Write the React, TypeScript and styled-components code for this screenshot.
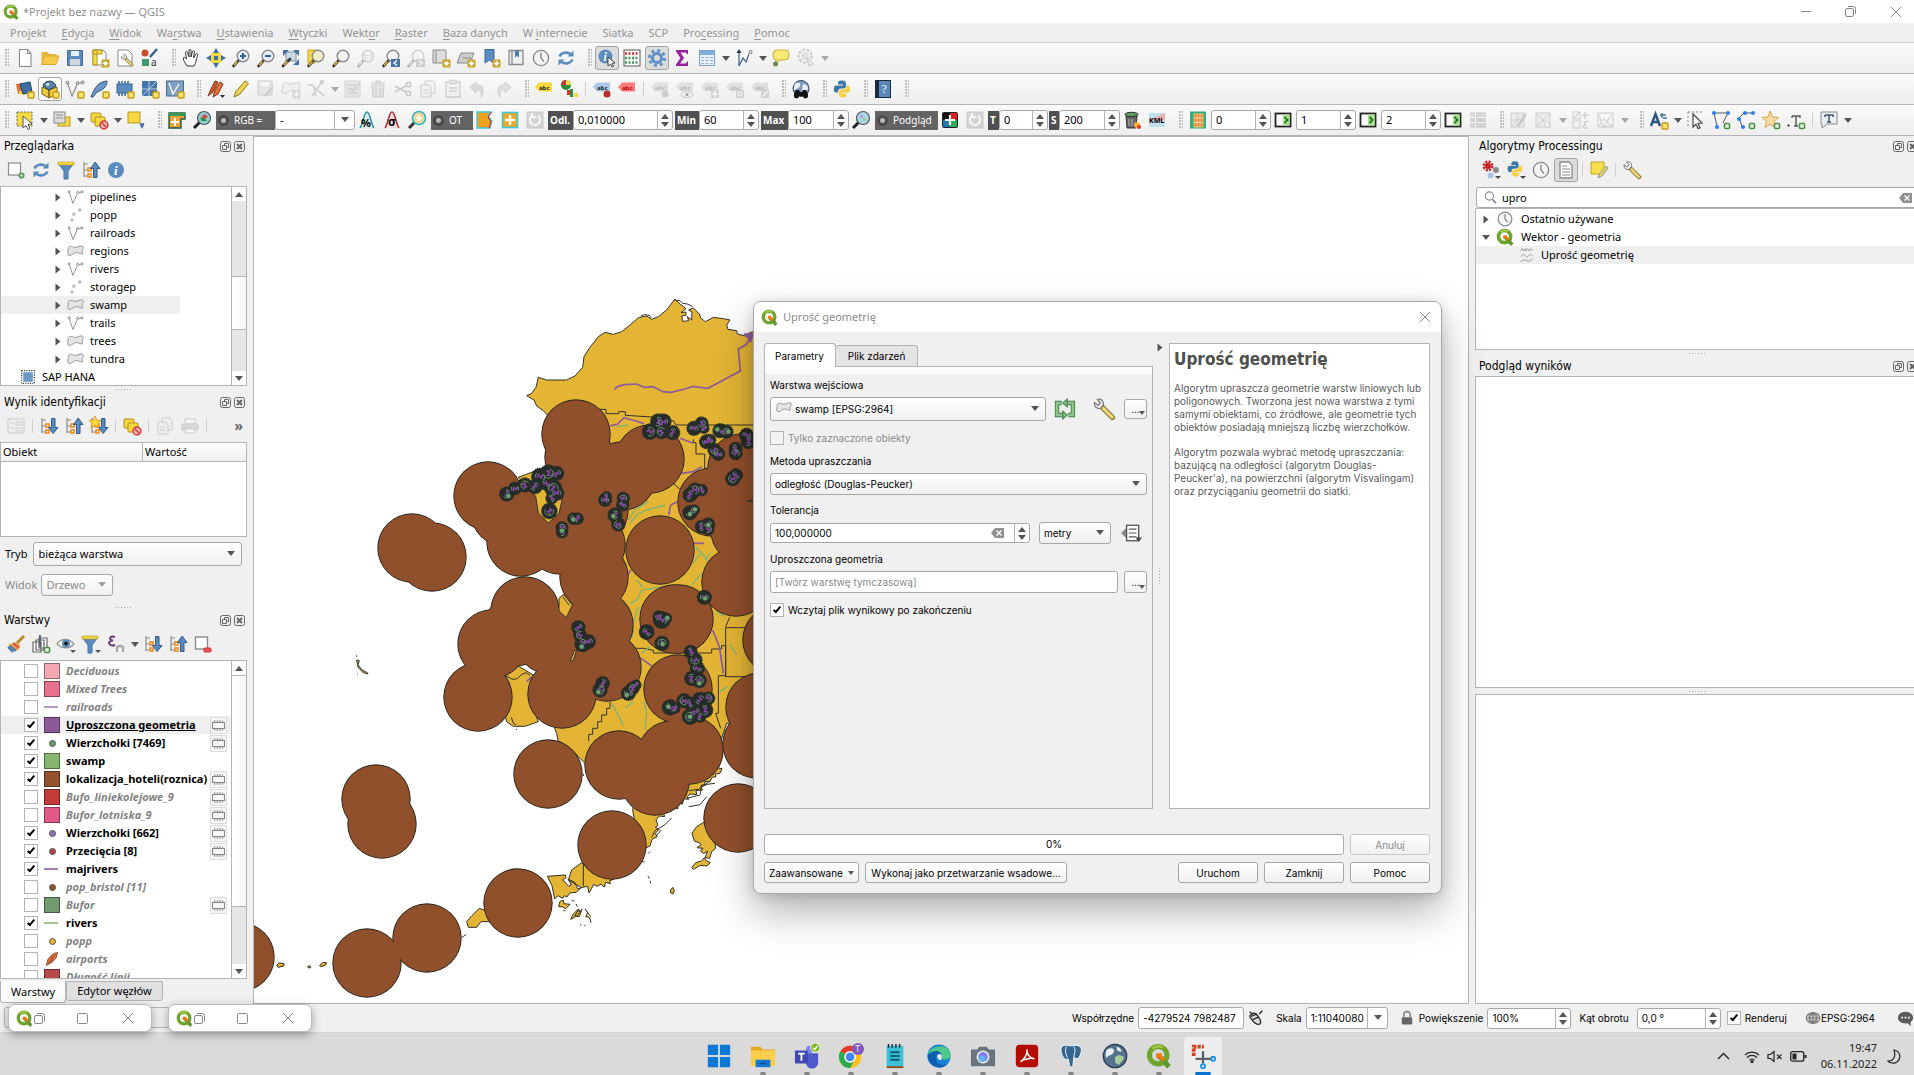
import React, { ReactNode } from "react";
import styled, { createGlobalStyle, css } from "styled-components";

const MAIN = `"Noto Sans", "Open Sans", sans-serif`;
const TITLE = `"DejaVu Sans Condensed", "DejaVu Sans", sans-serif`;
const DIALOG = `"Inter", "Noto Sans", sans-serif`;
const LINE = "#b4b4b4";

const Global = createGlobalStyle`
  *, *::before, *::after { box-sizing: border-box; }
  body { margin: 0; background: #f0f0f0; font-family: ${MAIN}; font-size: 11px; line-height: 16px; color: #000; }
  button, input, select { font: inherit; color: inherit; margin: 0; }
  svg { display: block; flex: none; }
`;

/* ---------- icon artwork, drawn on a 20 unit grid ---------- */
const Y = "#f5d93f", B = "#5b8cc0", G = "#8a8a8a", GR = "#5a9a58", OR = "#f08a1d";
const star = <g><rect x="11.5" y="11.5" width="8" height="8" rx="1" fill="#c9a227" /><path d="M15.5 12.8v5.4M12.8 15.5h5.4M13.6 13.6l3.8 3.8M17.4 13.6l-3.8 3.8" stroke="#fff" strokeWidth="1" /></g>;
const plusY = <rect x="13" y="13" width="6" height="6" rx="1" fill="#fbe36b" stroke="#c59a1a" strokeWidth="1.4" />;
const plusG = <rect x="13.5" y="13.5" width="5" height="5" rx="1" fill="#e9f5e6" stroke="#4d8f4a" strokeWidth="1.6" />;
const lens = (c: string) => <g><path d="M8 12 2.5 18" stroke="#333" strokeWidth="2.6" strokeLinecap="round" /><path d="M6.5 13.5 3 17.3" stroke="#f0c23a" strokeWidth="1.4" /><circle cx="12" cy="8" r="5.8" fill={c} stroke={G} strokeWidth="1.4" /></g>;
const nodeLine = <g fill="none" stroke={G} strokeWidth="1.1"><path d="M2.5 4 7 17 12.5 4.5l5-1" /><circle cx="2.5" cy="3.5" r="1.3" fill="#fff" /><circle cx="12.5" cy="4" r="1.3" fill="#fff" /><circle cx="17.6" cy="3.4" r="1.3" fill="#fff" /></g>;
const refresh = <g fill="none" stroke={B} strokeWidth="2.6"><path d="M3.5 8.5a7 6 0 0 1 11-2.5" /><path d="M16.5 11.5a7 6 0 0 1-11 2.5" /><path d="M17.5 2.5v6h-6z M2.5 17.5v-6h6z" fill={B} stroke="none" /></g>;
const clock = <g fill="#f6f6f6" stroke={G} strokeWidth="1.4"><circle cx="10" cy="10" r="7.6" /><path d="M10 4.5V10l3 3.5" fill="none" /></g>;
const qlogo = <g><circle cx="9.5" cy="9.5" r="6.8" fill="none" stroke="#6fa52e" strokeWidth="4" /><path d="M5 4.5a7 7 0 0 1 8-1" stroke="#a5c94a" strokeWidth="2" fill="none" /><path d="m10 10 8 8.5" stroke="#5d9a2c" strokeWidth="4" /><path d="M8 8h4.5L12 9.5l3 3-2 2-3-3L8 12z" fill="#ee7913" /></g>;
const layers2 = <g stroke="#b38f1a" fill={Y}><rect x="2" y="3" width="10" height="9" rx="1" /><rect x="6" y="7" width="10" height="9" rx="1" /></g>;
const noSign = <g><circle cx="15" cy="15" r="4" fill="#f7b0b0" stroke="#d23c3c" strokeWidth="1.4" /><path d="m12.5 12.5 5 5" stroke="#d23c3c" strokeWidth="1.4" /></g>;
const page = <path d="M4.5 1.5h8l3.5 4v13h-11.5z M12.5 1.5v4h3.5" fill="#fff" stroke={G} strokeWidth="1.1" />;
const tree = <path d="M3 2v15M3 4h4M3 10h4M3 16h4" fill="none" stroke={G} strokeWidth="1.2" />;
const sq = <g fill="#fff" stroke={OR} strokeWidth="1.6"><rect x="7" y="8" width="3" height="3" /><rect x="7" y="14" width="3" height="3" /></g>;
const down = <path d="M12.5 2.5h3.5v9h3L14.2 17.5 9.5 11.5h3z" fill={B} stroke="#2f5a8a" />;
const up = <path d="M12.5 17.5h3.5v-9h3L14.2 2 9.5 8.500h3z" fill={B} stroke="#2f5a8a" />;
const pencil = <path d="M3 18 5 12.5 14 2l3.5 2.5L8.5 15.5z" fill="#f1d24a" stroke="#8d7a25" />;
const wrench = <g><path d="m8 8 9 9" stroke="#8a7a34" strokeWidth="4.5" strokeLinecap="round" /><path d="m9.5 9.5 7.3 7.3" stroke="#ecd67a" strokeWidth="2.6" strokeLinecap="round" /><path d="M2 4.5 5 7l2-2L4.5 2C7 1 10 3 9.5 6.5L7 9.5C4 10 1.5 8 2 4.5z" fill="#eee" stroke="#777" /></g>;
const python = <g><path d="M10 1.5c-4 0-4 1.5-4 4h5v1H4c-3 0-3 7 0 7h2c0-3 1-4 4-4 4 0 4-1 4-4s-1-4-4-4z" fill="#3c77a8" /><path d="M10.500 18.500c4 0 4-1.500 4-4h-5v-1h6c4 0 3-7 .5-7h-1.500c0 3-1 4-4 4-4 0-3.500 2-3.500 4.500s1 3.500 4 3.500z" fill="#f7cf3f" /></g>;
const tag = (c: string, t: string) => <g><path d="M1 8 5 3.5h13v9H5z" fill={c} /><text x="5" y="10.5" fontSize="6" fontWeight="700" fontFamily="Noto Sans" fill={t}>abc</text></g>;
const poly = <path d="M1.500 6c1-3 4-2 7-1s6-2 9-1.500 1.500 3 .5 5 1.500 5-1 4.500-5-2.500-7.500-1.500-5 4-7.500 3 0-6-.5-8.500z" fill="#e4e4e4" stroke={G} />;
const globe = <g><circle cx="10" cy="9.5" r="8" fill="#7f9cc0" stroke="#31445c" /><path d="M5 4c3-1 5 0 4 3s-4 2-5 4-2-5 1-7zM12 5c4 0 5 3 5 5l-4 4-2-3z" fill="#e7eef4" /></g>;

const ART: Record<string, ReactNode> = {
  nowy: page,
  otworz: <g><path d="M1.500 4h6l2 2h7v3H4L1.500 15z" fill="#e8b93e" /><path d="M4.500 8h14.500l-3 8.500H1.500z" fill="#f5c949" stroke="#d9a52b" /></g>,
  zapisz: <g><path d="M2.500 2.500h15v15h-15z" fill={B} stroke="#4a6a8c" /><rect x="6" y="3" width="8" height="5" fill="#e8eef5" /><rect x="5" y="11" width="10" height="6.5" fill="#cfd6de" /></g>,
  wydruk: <g><path d="M3 2h10l3 3v12H3z" fill="#fff" stroke={G} /><path d="M3 2h4v15H3z M3 2h9v4H3z" fill={Y} stroke="#b9962c" />{star}</g>,
  menedzer: <g><path d="M3 2h10l4 4v12H3z" fill="#fff" stroke={G} /><g transform="translate(5 5) scale(.7)">{wrench}</g></g>,
  styl: <g><circle cx="5" cy="5" r="3.5" fill="#cc4a2c" /><path d="m10 9 7-8" stroke="#31628f" strokeWidth="2.4" /><rect x="2" y="11" width="7" height="7" fill="#3e9b6c" /><text x="11" y="18" fontSize="10" fontFamily="Noto Sans" fill="#333">a</text></g>,
  raczka: <path d="M6 18C4 15 2 12 2.500 10s2.500 1 3 1L4.500 4.500c0-1.500 2-1.500 2 0L8 9 8 2.500c0-1.500 2-1.500 2 0V9l1.500-5.500c.5-1.500 2-1 2 .5L12.500 10 15 6c1-1 2 0 1.500 1.500C15 12 15 15 13 18z" fill="#fff" stroke="#333" />,
  przesun: <g><rect x="5" y="5" width="10" height="10" fill={Y} /><path d="M10 0l3 5H7zM10 20l3-5H7zM0 10l5-3v6zM20 10l-5-3v6z" fill="#3f6fa8" /><rect x="8" y="8" width="4" height="4" fill="#3f6fa8" /></g>,
  powieksz: <g>{lens("#e8eef6")}<path d="M9 8h6M12 5v6" stroke="#2f62a0" strokeWidth="2" /></g>,
  pomniejsz: <g>{lens("#e8eef6")}<path d="M9 8h6" stroke="#2f62a0" strokeWidth="2" /></g>,
  zasieg: <g><rect x="5" y="4" width="10" height="9" fill="#cddbe9" stroke={G} /><path d="M2 2h6L2 8zM18 2h-6l6 6zM18 17h-6l6-6z" fill="#3f6fa8" /><path d="m9 11-7 7" stroke="#333" strokeWidth="2.6" strokeLinecap="round" /><path d="m6.500 13.500-3.500 3.500" stroke="#f0c23a" strokeWidth="1.4" /></g>,
  zaznaczone: <g><path d="M2 2h7v13H2z" fill={Y} stroke="#c2a32b" />{lens("#f2edc7")}</g>,
  warstwa: lens("#f2f2f2"),
  natywny: <g>{lens("#f2f2f2")}<text x="7" y="11" fontSize="7" fontFamily="Noto Sans" fill="#555">1:1</text></g>,
  poprzedni: <g>{lens("#f4f4f4")}<path d="M10 11h9v8h-9z" fill="#4473a5" /><path d="m16 12.500-3 2.500 3 2.500" stroke="#fff" fill="none" strokeWidth="1.4" /></g>,
  nastepny: <g>{lens("#f4f4f4")}<path d="M10 11h9v8h-9z" fill="#888" /><path d="m13 12.500 3 2.500-3 2.500" stroke="#fff" fill="none" strokeWidth="1.4" /></g>,
  mapa: <g><path d="M2 2h13v13H2z M5 2v13" fill="#ddd" stroke={G} />{star}</g>,
  mapa3d: <g><path d="M5 5h13l-4 10H1z M7 10h8" fill="#ccc" stroke={G} />{star}</g>,
  zakladka: <g><path d="M4 1.500h9v14L8.500 12 4 15z" fill={B} stroke="#3a6698" />{star}</g>,
  zakladki: <g><path d="M3 2.500h14v14H3z M6 2.500v14" fill="#eee" stroke={G} strokeWidth="1.3" /><path d="M9 2.500h4v7l-2-1.500-2 1.500z" fill="#4b7db5" /></g>,
  czas: clock,
  odswiez: refresh,
  informacje: <g><circle cx="8.5" cy="8.5" r="7" fill={B} /><text x="6.5" y="13" fontSize="12" fontStyle="italic" fontWeight="700" fontFamily="Liberation Serif" fill="#fff">i</text><path d="m11 9 7 6-3 .3 1.500 3-1.500.7-1.500-3-2.500 2z" fill="#fff" stroke="#444" /></g>,
  statystyki: <g><rect x="2" y="2" width="16" height="16" fill="#fff" stroke="#555" /><path d="M3 5.500h14" stroke="#c33" strokeWidth="2.5" strokeDasharray="2 1.5" /><path d="M3 10h14M3 14.500h14" stroke="#3a9a5a" strokeWidth="2.5" strokeDasharray="2 1.5" /></g>,
  narzedzia: <g fill="none" stroke="#5e90c8"><circle cx="10" cy="10" r="4.5" strokeWidth="3" /><circle cx="10" cy="10" r="7.5" strokeWidth="3" strokeDasharray="3 2.89" /></g>,
  suma: <path d="M4 2h12v4h-1.500L14 4.500H8.500L12 10l-4 5.500h6l.8-2H16V18H4v-1.500L8.500 10 4 3.500z" fill="#9a1fa0" />,
  tabela: <g><rect x="2.5" y="2.5" width="15" height="15" fill="#eaf2fa" stroke="#7ba0c8" /><rect x="3" y="3" width="14" height="4" fill="#7fb0de" /><path d="M4 9.500h12M4 12.500h12M4 15.500h12" stroke="#8cb2d8" strokeDasharray="3 1.5" /></g>,
  pomiar: <g fill="none" stroke="#3d6288" strokeWidth="1.2"><path d="M5 18V4M5 18l4-8 3 4 3-8" /><path d="m5 1 2.500 4h-5z" fill="#234" stroke="none" /><circle cx="16.5" cy="4" r="1.5" stroke={G} /></g>,
  podpowiedz: <g><rect x="2" y="2" width="16" height="10" rx="4" fill="#f8e878" stroke="#c9ac3a" /><path d="m9 12-4 4V12" fill="#f8e878" stroke="#c9ac3a" /><circle cx="4.5" cy="16" r="2.5" fill="#6c8a5a" /></g>,
  akcja: <g><circle cx="9" cy="8" r="6.5" fill="none" stroke="#777" strokeWidth="2" strokeDasharray="3 1.5" /><circle cx="9" cy="8" r="4" fill="#bbb" /><path d="m11 10 7 6-5 2z" fill="#ddd" stroke="#777" /></g>,
  zrodla: <g><path d="m1 5 7-1 2 9-7 2z" fill="#e1703f" /><path d="m4 12 7 1-1 3-6-1z" fill={Y} /><path d="m5 5 10-2 2 10-9 2z" fill="#3f70a5" stroke="#1d3f66" />{plusY}</g>,
  geopakiet: <g><path d="m2 8 7 3v8l-7-4zM9 11l8-3v7l-8 4z" fill="#f0c93c" stroke="#7a6210" /><path d="M3 7c1-6 11-7 13 0l-7 4z" fill="#5d86b0" stroke="#2b3f58" /><path d="M6 5c2-2 4-1 3 1s-2 1-3-1z" fill="#dfe9f2" />{plusY}</g>,
  shp: <g>{nodeLine}{plusY}</g>,
  spatialite: <g><path d="M1 18C5 8 8 3 17 2c0 6-4 9-10 11l-4 5z" fill="#6b97c6" stroke="#38597d" />{plusY}</g>,
  tymczasowa: <g><rect x="2" y="5" width="15" height="9" fill={B} stroke="#3a6698" /><path d="M4 5V2M7 5V2M10 5V2M13 5V2M4 17v-3M7 17v-3M10 17v-3" stroke="#3a6698" strokeWidth="1.5" />{plusY}</g>,
  siatka: <g><rect x="2" y="2" width="15" height="15" fill="#4777a8" /><path d="M2 10h15M9 2v15M2 17 17 2" stroke="#b9d0e8" />{plusY}</g>,
  wirtualna: <g><rect x="1.5" y="2" width="17" height="15" fill="#7da0c4" stroke="#4a6a8c" /><path d="m4 4 4 11 6-10" stroke="#fff" strokeWidth="1.3" fill="none" />{plusY}</g>,
  edycje: <g stroke="#7d3a1a"><path d="M2 17 5 10 9 2l3 1-5 10z" fill="#d95427" /><path d="m7 18 2-7 5-8 3 2-5 10z" fill="#e2733a" /><path d="M14 16h5l-2.500 3z" fill="#333" stroke="none" /></g>,
  edytuj: pencil,
  zapiszwarstwe: <g><rect x="2" y="2" width="14" height="14" fill="#ccc" stroke="#888" /><path d="M5 3h8v4H5z" fill="#fff" /><path d="m9 17 8-9" stroke="#888" strokeWidth="2.4" /></g>,
  dodajobiekt: <g>{poly}{star}</g>,
  wierzcholki: <g fill="none" stroke="#888" strokeWidth="1.5"><path d="M2 6h5l3 11M16 3 6 17M8 8l10 9" /><circle cx="16" cy="3" r="1.5" /></g>,
  atrybuty: <g><rect x="2" y="2" width="15" height="16" fill="#ccc" stroke="#999" /><path d="M4 6h11M4 10h11M4 14h11" stroke="#777" /><path d="m7 15 10-12" stroke="#999" strokeWidth="2.4" /></g>,
  usun: <g fill="#ccc" stroke="#777"><path d="M4 6h12l-1 12H5zM3 4h14M8 4V2h4v2M8 8v8M12 8v8" /></g>,
  wytnij: <g fill="none" stroke="#777" strokeWidth="1.5"><path d="M2 7 13 13M2 13 13 7" /><circle cx="15.5" cy="5.5" r="2.2" /><circle cx="15.5" cy="14.5" r="2.2" /></g>,
  kopiuj: <g fill="#eee" stroke="#888"><path d="M7 2h8l2 3v9H7z" /><path d="M3 6h8l2 3v9H3z" /><path d="M5 11h6M5 14h6" /></g>,
  wklej: <g fill="#eee" stroke="#888" strokeWidth="1.3"><path d="M3 3h14v15H3z" /><path d="M7 1.500h6v3H7z M6 9h8M6 12h8" /></g>,
  cofnij: <path d="M2 8 8 3v3c7-1 9 5 5 12 1-5-1-8-5-7v3z" fill="#aaa" stroke="#888" />,
  ponow: <path d="M18 8 12 3v3C5 5 3 11 7 18c-1-5 1-8 5-7v3z" fill="#bbb" stroke="#888" />,
  etykieta: tag(Y, "#222"),
  diagram: <g><circle cx="7" cy="6" r="5" fill="#2f8a3a" /><path d="M7 6V1a5 5 0 0 1 5 5z" fill={Y} /><path d="M2 6a5 5 0 0 1 5-5v5z" fill="#c33" /><path d="M8 11h3v5H8z" fill="#c33" /><path d="M11 10h3v8h-3z" fill="#2f8a3a" /><path d="M15 14h4v4h-4z" fill={Y} /></g>,
  pin: <g>{tag("#a9c8ea", "#222")}<circle cx="15" cy="15" r="3.5" fill="#b52d2d" /></g>,
  etykieta2: tag("#ff7d7d", "#a00"),
  et1: <g>{tag("#bbb", "#444")}<circle cx="15" cy="15" r="3.5" fill="#888" /></g>,
  et2: <g>{tag("#bbb", "#444")}<ellipse cx="12" cy="15.5" rx="6" ry="3" fill="#eee" stroke="#777" /><circle cx="12" cy="15.5" r="1.5" /></g>,
  et3: <g>{tag("#bbb", "#444")}<rect x="11" y="11" width="8" height="8" fill="#999" /><path d="M15 12v6M12 15h6" stroke="#fff" strokeWidth="1.5" /></g>,
  et4: <g>{tag("#bbb", "#444")}<rect x="11" y="11" width="8" height="8" fill="#999" /><circle cx="15" cy="15" r="2" stroke="#fff" fill="none" /></g>,
  et5: <g>{tag("#bbb", "#444")}<rect x="11" y="11" width="8" height="8" fill="#999" /><path d="m12.500 17.500 5-5" stroke="#fff" strokeWidth="1.5" /></g>,
  szukajmapy: <g>{globe}<path d="M4 19c-2-1-1-5 1-8h3l1 2h2l1-2h3c2 3 3 7 1 8s-4 0-4-2H8c0 2-2 3-4 2z" fill="#111" /></g>,
  python: python,
  pomoc: <g><rect x="2.5" y="1.5" width="15" height="17" fill="#5b86b8" stroke="#1b2a3c" /><rect x="2.5" y="1.5" width="3.5" height="17" fill="#1b2a3c" /><text x="8.500" y="14" fontSize="12" fontFamily="Liberation Serif" fill="#fff">?</text></g>,
  zaznacz: <g><rect x="2" y="2" width="15" height="14" fill={Y} stroke="#666" strokeDasharray="2 1.5" /><path d="m8 6 9 8-4 .5 2 4-2 1-2-4-3 2.500z" fill="#fff" stroke="#555" /></g>,
  zaznaczwart: <g><rect x="6" y="7" width="12" height="9" fill={Y} stroke="#b9962c" /><rect x="2" y="2" width="11" height="11" fill="#ddd" stroke={G} /><path d="M4 5h7M4 8h7" stroke={G} /></g>,
  odznacz: <g>{layers2}{noSign}</g>,
  zaznaczlok: <g><rect x="2" y="2" width="12" height="11" fill={Y} stroke="#b9962c" /><path d="M16 19c-3-5-3-6 0-6s3 1 0 6z" fill="#4d7ab0" /></g>,
  scp: <g><path d="M2 3h16v6h-4v9H2z" fill="#e9a03a" stroke="#1d5c3c" strokeWidth="1.4" /><path d="M2 3h16v3H2z" fill="#3b9a50" /><path d="M8 8v8M4 12h8" stroke="#fff" strokeWidth="2" /></g>,
  scpzoom: <g><path d="M8 12 2 18" stroke="#222" strokeWidth="3" /><circle cx="12" cy="8" r="6.5" fill="#8fd0d1" stroke="#555" strokeWidth="1.2" /><path d="M9 7l4-3 3 3-3 2z" fill="#d44" /><path d="M8 8h4l3 3h-5z" fill="#2f8a4a" /></g>,
  podglad: <g><path d="M8 12 2 18" stroke="#222" strokeWidth="3" /><circle cx="12" cy="8" r="6.500" fill="#a9d6ea" stroke="#555" strokeWidth="1.2" /><path d="M9 5h3v3H9z" fill="#b79ad0" /><path d="M12 8h3v3h-3z" fill="#9fd08a" /></g>,
  lut1: <g><path d="M3 18C6 14 7 2 10 2s4 12 7 16" fill="#d8ece4" stroke="#2a8a9a" strokeWidth="1.4" /><text x="4" y="17" fontSize="11" fontWeight="700" fontFamily="Noto Sans">%</text></g>,
  lut2: <g><path d="M3 18C6 14 7 2 10 2s4 12 7 16" fill="#f2dede" stroke="#a33" strokeWidth="1.6" /><text x="6" y="16" fontSize="12" fontWeight="700" fontFamily="Noto Sans">σ</text></g>,
  roi: <g><path d="M8 12 2 18" stroke="#333" strokeWidth="3" /><circle cx="12" cy="8" r="6.5" fill="#ecdb98" stroke="#38b6c8" strokeWidth="1.6" /><path d="M12 5v6M9 8h6" stroke="#fff" strokeWidth="1.5" /></g>,
  roipoly: <g><path d="M2 2h14l-3 4 4 5-2 7H2z" fill="#eda21f" stroke="#3cc8da" strokeWidth="1.3" /><path d="m17 2-4 5 3 5-2 6" stroke="#c22" fill="none" /></g>,
  roiplus: <g><rect x="2.5" y="2.5" width="15" height="15" fill="#e9a82a" stroke="#3cc8da" strokeWidth="1.6" /><path d="M10 5v10M5 10h10" stroke="#fff" strokeWidth="2.4" /></g>,
  roired: <g><rect x="2" y="2" width="16" height="16" fill="#999" stroke="#777" /><path d="M7 6a5 5 0 1 0 6 0M7 3v4h4" stroke="#fff" strokeWidth="2" fill="none" /></g>,
  klasy: <g><rect x="2" y="2" width="16" height="16" rx="2" fill="#223" /><rect x="3" y="3" width="7" height="7" fill="#111" /><rect x="10" y="3" width="7" height="7" fill="#d22" /><rect x="3" y="10" width="7" height="7" fill="#27a" /><rect x="10" y="10" width="7" height="7" fill="#3a5" /><path d="M10 5v10M5 10h10" stroke="#fff" strokeWidth="2.2" /></g>,
  kosz: <g><path d="M4 6h11l-1 12H5z" fill="#666" stroke="#333" /><path d="M7 9v7M10 9v7" stroke="#bbb" /><ellipse cx="9.5" cy="4.5" rx="6.5" ry="2.2" fill="#5d9a5d" stroke="#333" /><circle cx="15" cy="15" r="3" fill="#f0b52b" /><circle cx="17" cy="17" r="2" fill="#d33" /></g>,
  kml: <g><rect x="2" y="3" width="16" height="14" fill="#bfe0ee" /><path d="M2 10 18 3v8z" fill="#eab0b0" /><text x="2" y="13" fontSize="7" fontWeight="700" fontFamily="Noto Sans">KML</text></g>,
  raster: <g><rect x="2" y="1.5" width="16" height="17" fill="#3aa880" /><rect x="6" y="4" width="9" height="13" fill="#f07a3a" stroke="#dcd25a" /><path d="M9 4v13M12 4v13M6 8h9M6 12.500h9" stroke="#f8dd9a" /></g>,
  dalej: <g><rect x="2.5" y="3.5" width="15" height="13" fill="#fff" stroke="#222" strokeWidth="1.8" /><rect x="10" y="4.5" width="6.5" height="11" fill="#a5e08a" /><path d="m11.500 7 3 3-3 3" stroke="#1e7a1e" strokeWidth="1.8" fill="none" /></g>,
  mozaika: <g><path d="M2 2h5v5H2zM13 2h5v5h-5zM2 13h5v5H2z" fill="#d99" /><path d="M8 2h5v5H8zM2 8h5v4H2zM8 13h10v5H8z" fill="#999" /><path d="M8 8h10v4H8z" fill="#88b" /></g>,
  przelacz: <g fill="none" stroke="#888"><rect x="2" y="3" width="13" height="14" fill="#ddd" /><path d="M2 17 15 3M8 3v14M2 10h13" /><path d="m9 16 8-12" stroke="#a66" strokeWidth="2.4" /></g>,
  siatkasel: <g fill="none" stroke="#888"><rect x="2" y="3" width="14" height="14" fill="#ddd" /><path d="M2 17 16 3M2 3l14 14" /><path d="m9 9 8 7-5 2z" fill="#fff" /></g>,
  siatkawyr: <g fill="none" stroke="#888"><rect x="2" y="2" width="7" height="7" /><rect x="2" y="11" width="7" height="7" /><path d="M2 9 9 2M14 2v7M11 5h7M17 12c-4-1-5 2-2 3-4 0-4 4 2 3" strokeWidth="1.3" /></g>,
  siatkawez: <g fill="none" stroke="#888"><rect x="2" y="3" width="15" height="14" /><path d="m2 3 5 14L17 3M7 17l10-2M2 17l6-8 9 8" /></g>,
  adnotacja: <g><path d="M2 16 6.500 4 11 16M3.500 12h6" stroke="#2a5580" strokeWidth="2.4" fill="none" /><path d="M13 3v5M11 5h6M14 8h4" stroke="#4777a8" strokeWidth="1.5" />{plusY}</g>,
  zmienadn: <g><path d="M2 2h16M2 2v14" stroke={G} strokeDasharray="2 2" /><path d="m7 4 9 9-4 .3 2 4.500-2 .8-2-4.400L7 17z" fill="#fff" stroke="#444" strokeWidth="1.2" /></g>,
  adnpoly: <g><path d="M3 3h14M3 3l3 13M17 3l-5 10" stroke="#555" fill="none" /><g fill="#2f7ff0"><circle cx="3" cy="3" r="2" /><circle cx="17" cy="3" r="2" /><circle cx="6" cy="17" r="2" /></g>{plusG}</g>,
  adnlinia: <g><path d="M17 3H8L3 8l3 8" stroke="#555" fill="none" /><g fill="#2f7ff0"><circle cx="9" cy="3" r="2" /><circle cx="17" cy="3" r="2" /><circle cx="3" cy="9" r="2" /><circle cx="7" cy="17" r="2" /></g>{plusG}</g>,
  adnpunkt: <g><path d="m9 1 2.500 6 6 .5-4.500 4 1.500 6-5.500-3-5 3 1.500-6L1 7.500 7 7z" fill="#fbd9a0" stroke="#e0a34a" />{plusG}</g>,
  adntekst: <g><path d="M6 6h8v2M10 6v10M8 16h4M6 6v2" stroke="#555" fill="none" strokeWidth="1.4" /><circle cx="2.5" cy="15.500" r="1" />{plusG}</g>,
  adntekst2: <g><path d="M2 2h16v12H8l-5 4V14H2z" fill="#e8eef4" stroke={G} /><path d="M6 5h8v2M10 5v7M8 12h4M6 5v2" stroke="#456" fill="none" strokeWidth="1.5" /></g>,
  dodajwarstwe: <g><rect x="2.5" y="3" width="12" height="12" fill="#fff" stroke={G} strokeWidth="1.2" /><circle cx="15.500" cy="15.500" r="2.2" fill="#d9efd5" stroke={GR} strokeWidth="1.8" /></g>,
  filtr: <g><path d="M2 3h16l-6 8v8H8v-8z" fill={B} stroke="#44709f" /><path d="M2 2h16v3H2z" fill={Y} stroke="#b9962c" strokeWidth=".6" /></g>,
  filtrm: <g><path d="M1 3h16l-6 8v8H7v-8z" fill={B} stroke="#44709f" /><path d="M1 2h16v3H1z" fill={Y} stroke="#b9962c" strokeWidth=".6" /><path d="M14 16h6l-3 3z" fill="#555" /></g>,
  zwin: <g>{tree}{sq}{up}</g>,
  rozwin: <g>{tree}{sq}{down}</g>,
  rozwinnowe: <g>{tree}{sq}{down}<path d="m6 0 1.800 4 4.200.5-3 3 .8 4L6 9.500 2 11.500l1-4-3-3L4 4z" fill="#ffd83a" stroke="#e08a1a" strokeWidth=".8" /></g>,
  info: <g><circle cx="10" cy="10" r="8" fill={B} /><text x="8" y="15" fontSize="13" fontStyle="italic" fontWeight="700" fontFamily="Liberation Serif" fill="#fff">i</text></g>,
  formularz: <g fill="#eee" stroke="#888"><rect x="2" y="3" width="16" height="14" /><path d="M4 7h4M4 12h4M10 6h6v3h-6zM10 12h6v3h-6z" /></g>,
  drukuj: <g fill="#aaa" stroke="#888"><path d="M5 3h10v5H5z" fill="#fff" /><path d="M2 8h16v6H2z" /><path d="M5 13h10v4H5z" fill="#fff" /></g>,
  pedzel: <g><path d="m11 9 7-7" stroke="#b9892f" strokeWidth="3" /><path d="M3 10c4 0 6-2 8-2l3 3c0 4-4 7-8 6S2 13 3 10z" fill="#e8a14a" /><path d="m4 12 6 5M2 13l5 5" stroke="#3d78c0" strokeWidth="2" /><path d="m7 9 6 5" stroke="#d54" strokeWidth="2" /></g>,
  grupa: <g fill="#fff" stroke="#666" strokeWidth="1.2"><path d="M8 4h8v10H8zM5 6h8v10H5zM2 8h8v10H2z" /><path d="M9 1v12" strokeWidth="2" stroke="#567" />{plusG}</g>,
  oko: <g><path d="M1 10C5 4 13 4 18 10c-4 5-12 5-17 0z" fill="#fff" stroke="#999" strokeWidth="1.4" /><circle cx="10" cy="9.500" r="4" fill="#5d87b5" /><circle cx="10" cy="9.500" r="1.8" fill="#111" /><path d="M14 16h6l-3 3z" fill="#555" /></g>,
  wyrazenie: <g fill="none"><path d="M9 3C4 1 2 6 7 6.500 0 7 3 13 9 11" stroke="#6b3a7a" strokeWidth="2" /><path d="M11 18v-5q3-2 6 0v5" stroke="#aaa" strokeWidth="2.4" /></g>,
  usunwarstwe: <g><rect x="2.5" y="3" width="12" height="12" fill="#fff" stroke={G} strokeWidth="1.4" /><rect x="11" y="14" width="7" height="4" rx="1" fill="#e55" stroke="#c33" /></g>,
  modele: <g><circle cx="7" cy="6" r="4" fill="none" stroke="#c62828" strokeWidth="3" strokeDasharray="2 1.14" /><circle cx="7" cy="6" r="3" fill="#c62828" /><circle cx="15" cy="10" r="3" fill={G} /><circle cx="9.500" cy="15.500" r="3" fill="#a9c4e6" /><path d="M14 16h6l-3 3z" fill="#444" /></g>,
  skrypty: <g><g transform="scale(.9)">{python}</g><path d="M14 16h6l-3 3z" fill="#444" /></g>,
  wyniki: <g><path d="M4 2h9l3 3v13H4z" fill="#fff" stroke={G} strokeWidth="1.3" /><path d="M6 6h5M6 9h8M6 12h8M6 15h8" stroke={G} /></g>,
  wmiejscu: <g><path d="M2 2h13v12H2z" fill="#f7df4d" stroke="#c2a32b" /><path d="m9 18 2-5 6-7 2 2-6 8z" fill="#e3d36a" stroke="#999" /></g>,
  opcje: wrench,
  iteruj: <g fill="none" stroke="#3f7f45" strokeWidth="4"><path d="M7 4.500H2.800v11H9M13 15.500h4.200v-11H11" /><path d="M7 4.500H2.800v11H9M13 15.500h4.200v-11H11" stroke="#8cc48a" strokeWidth="2.4" /><path d="m8 12 4 3.500L8 19zM12 1 8 4.500 12 8z" fill="#8cc48a" strokeWidth="1" /></g>,
  dane: <g><path d="M1 10 6 5v10z" fill={G} /><rect x="6" y="3" width="11" height="14" fill="#fff" stroke="#555" strokeWidth="1.2" /><path d="M8 6.500h7M8 10h7M8 13.500h7" stroke="#555" /><path d="M14 14h6l-3 4z" fill="#444" /></g>,
  linia: nodeLine,
  punkt: <g fill="#fff" stroke={G}><circle cx="6" cy="15" r="1.3" /><circle cx="8" cy="8.500" r="1.3" /><circle cx="15" cy="3.500" r="1.3" /></g>,
  poligon: poly,
  hana: <g><rect x="4" y="4" width="12" height="12" fill="#6c9ac8" /><rect x="2" y="2" width="16" height="16" fill="none" stroke="#444" strokeWidth="1.5" strokeDasharray="1.5 1.5" /></g>,
  uprosc: <g fill="none" stroke={G}><path d="m2 5 2-3 2 3 2-3 1 3 2-3 2 3 2-3 2 2M2 12l4-3 4 4 4-4 3 2M2 18l5-2 5 2 5-3" /></g>,
  qgis: qlogo,
  lupa: <g fill="none" stroke={G} strokeWidth="1.4"><circle cx="8.500" cy="8" r="5.5" /><path d="m12.500 12.500 5 5" strokeWidth="2" /></g>,
  pamiec: <g fill="none" stroke="#888" strokeWidth="1.4"><rect x="2" y="6" width="16" height="8" /><path d="M5 6V3M8.300 6V3M11.600 6V3M15 6V3M5 17v-3M8.300 17v-3M11.600 17v-3M15 17v-3" /></g>,
  lotnisko: <g><path d="m3 18 2-8L12 3l5-1-2 7-5 5z" fill="#e2702f" stroke="#8a3f17" /><path d="m4 18 10-14M9 6l1 8" stroke="#8a4a5a" /></g>,
  mysz: <g><path d="M5 5c3-3 6 0 9 5s2 8-1 8-6-3-9-7-1-5 1-6z" fill="#ddd" stroke="#222" strokeWidth="1.6" /><path d="m4 8 7-3M6 12l7-3M14 5l4-4M2 2l3 3" stroke="#222" strokeWidth="1.6" /></g>,
  klodka: <g><path d="M6 9V6a4 4 0 0 1 8 0v3" fill="none" stroke="#888" strokeWidth="2" /><rect x="3.5" y="9" width="13" height="9" rx="1.5" fill="#666" /></g>,
  uklad: <g fill="none" stroke="#777" strokeWidth="1.3"><ellipse cx="10" cy="10" rx="8.5" ry="7" fill="#ccc" /><path d="M1.500 10h17M10 3v14M4 6h12M4 14h12M10 3c-6 4-6 10 0 14M10 3c6 4 6 10 0 14" /></g>,
  dymek: <g><ellipse cx="10" cy="9" rx="9" ry="7" fill="#5a5a5a" /><path d="m11 14 5 5v-6z" fill="#5a5a5a" /><path d="M5 9h10" stroke="#fff" strokeWidth="2" strokeDasharray="2 2" /></g>,
};

const Icon = ({ n, size = 20 }: { n: string; size?: number }) => (
  <svg width={size} height={size} viewBox="0 0 20 20" aria-hidden="true">{ART[n]}</svg>
);

/* ---------- shared controls ---------- */
const ToolBtn = styled.button<{ $on?: boolean; $box?: boolean }>`
  width: 24px; height: 24px; margin-right: 1px; padding: 0; flex: none;
  display: grid; place-items: center; border-radius: 3px;
  border: 1px solid ${p => (p.$on || p.$box ? "#a4a4a4" : "transparent")};
  background: ${p => (p.$on ? "#dcdcdc" : p.$box ? "#fff" : "none")};
  &:disabled svg { opacity: 0.35; filter: grayscale(1); }
`;
const Handle = styled.span<{ $first?: boolean }>`
  flex: none; height: 18px; width: ${p => (p.$first ? 13 : 16)}px;
  padding-left: ${p => (p.$first ? 5 : 9)}px;
  &::after { content: ""; display: block; width: 4px; height: 100%;
    background: radial-gradient(circle at 1px 1px, #bdbdbd 0.8px, transparent 1px) 0 0 / 3px 3px; }
`;
const Sep = styled.span`flex: none; width: 8px; height: 14px; &::after { content: ""; display: block; width: 1px; height: 100%; margin-left: 3px; background: #cfcfcf; }`;
const triangle = (c: string, w = 4) => css`width: 0; height: 0; border: ${w}px solid transparent; border-top: ${w + 1}px solid ${c}; border-bottom: 0;`;
const Caret = styled.button<{ $off?: boolean }>`
  width: 12px; height: 22px; padding: 0; border: 0; background: none; flex: none; display: grid; place-items: center;
  &::after { content: ""; ${p => triangle(p.$off ? "#a8a8a8" : "#555")} }
`;
const BoxWrap = styled.span<{ $w?: number; $h: number }>`
  display: flex; align-items: stretch; overflow: hidden; background: #fff;
  ${p => (p.$w ? `width: ${p.$w}px; flex: none;` : "flex: 1; min-width: 0;")}
  height: ${p => p.$h}px; border: 1px solid #a8a8a8; border-radius: 3px;
  input { flex: 1; min-width: 0; width: 0; border: 0; padding: 0 4px; background: none; outline: 0; }
  input::placeholder { color: #8a8a8a; opacity: 1; }
`;
const Steps = styled.span`
  width: 15px; flex: none; border-left: 1px solid ${LINE}; display: flex; flex-direction: column; justify-content: center; gap: 3px;
  button { border: 0; padding: 0; background: none; height: 5px; display: grid; place-items: center; }
  button::after { content: ""; ${triangle("#555")} }
  button:first-child::after { transform: rotate(180deg); }
`;
const ClearBtn = styled.button`border: 0; padding: 0; margin-right: 10px; background: none; display: grid; place-items: center;`;
const ClearIcon = () => (
  <ClearBtn type="button" aria-label="Wyczyść"><svg width="13" height="10" viewBox="0 0 13 10"><path d="M0 5 4 0h9v10H4z" fill="#909090" /><path d="m5.500 2.500 5 5m0-5-5 5" stroke="#fff" strokeWidth="1.2" /></svg></ClearBtn>
);
const Spin = ({ label, value, w, h = 20, clear }: { label: string; value: string; w?: number; h?: number; clear?: boolean }) => (
  <BoxWrap $w={w} $h={h}>
    <input aria-label={label} defaultValue={value} />
    {clear && <ClearIcon />}
    <Steps><button type="button" aria-label="Więcej" /><button type="button" aria-label="Mniej" /></Steps>
  </BoxWrap>
);
const SelectWrap = styled.span<{ $w?: number; $h: number; $off?: boolean; $pad?: number; $split?: boolean; $white?: boolean }>`
  position: relative; display: flex; height: ${p => p.$h}px;
  ${p => (p.$w ? `width: ${p.$w}px; flex: none;` : "flex: 1; min-width: 0;")}
  color: ${p => (p.$off ? "#8a8a8a" : "#000")};
  select { appearance: none; width: 100%; padding: 0 20px 0 ${p => p.$pad || 4}px; border: 1px solid #a8a8a8; border-radius: 3px; opacity: 1;
    color: inherit; background: ${p => (p.$white ? "#fff" : "linear-gradient(#fff, #f0f0f0)")}; }
  &::after { content: ""; position: absolute; right: ${p => (p.$split ? 6 : 7)}px; top: 50%; margin-top: -3px; pointer-events: none; ${p => triangle(p.$off ? "#a0a0a0" : "#555")} }
  &::before { content: ""; position: absolute; right: 20px; top: 1px; bottom: 1px; width: ${p => (p.$split ? 1 : 0)}px; background: ${LINE}; }
  > svg { position: absolute; left: 6px; top: 3px; }
`;
const Select = ({ label, value, icon, ...r }: { label: string; value: string; icon?: string; w?: number; h: number; off?: boolean; split?: boolean; white?: boolean }) => (
  <SelectWrap $w={r.w} $h={r.h} $off={r.off} $split={r.split} $white={r.white} $pad={icon ? 24 : 4}>
    <select aria-label={label} disabled={r.off}><option>{value}</option></select>
    {icon && <Icon n={icon} size={16} />}
  </SelectWrap>
);
const Check = styled.input.attrs({ type: "checkbox" })`
  appearance: none; flex: none; width: 14px; height: 14px; margin: 0; border: 1px solid ${LINE}; background: #fff; display: grid; place-items: center;
  &:checked::after { content: ""; width: 4px; height: 8px; border: solid #000; border-width: 0 2px 2px 0; transform: rotate(40deg); margin-top: -2px; }
  &:disabled { background: #f2f2f2; }
`;
const Gap = styled.span<{ $w: number }>`width: ${p => p.$w}px; flex: none;`;
const Rise = styled.div<{ $h: number }>`height: ${p => p.$h}px; flex: none;`;

/* ---------- top chrome ---------- */
const Page = styled.div`position: relative; min-height: 100vh; display: flex; flex-direction: column; overflow: hidden;`;
const TitleBar = styled.header`
  height: 23px; background: #fff; display: flex; align-items: center; padding-left: 3px; gap: 4px; color: #8f8f8f;
  h1 { flex: 1; margin: 0; font: inherit; }
`;
const WinBtns = styled.div`display: flex; margin-right: -4px;`;
const WinBtn = styled.button<{ $w?: number }>`width: ${p => p.$w ?? 45}px; height: 22px; border: 0; background: none; padding: 0; display: grid; place-items: center; color: #888;`;
const Menu = styled.nav`
  height: 20px; display: flex; align-items: center; gap: 1px; padding-left: 3px; border-bottom: 1px solid #d0d0d0; color: #949494;
  button { border: 0; background: none; padding: 0 7px; white-space: nowrap; }
  u { text-underline-offset: 2px; }
`;
const Bar = styled.div`
  height: 31px; display: flex; align-items: center; background: linear-gradient(#fafafa, #eeeeee); border-bottom: 1px solid ${LINE}; overflow: hidden;
`;
const DarkTag = styled.span<{ $w: number }>`
  width: ${p => p.$w}px; background: #505050; color: #fff; font: 700 10px/19px ${MAIN}; height: 19px; padding-left: 2px; flex: none;
`;
const Radio = styled.label<{ $w: number }>`
  width: ${p => p.$w}px; background: #636363; color: #fff; height: 19px; display: flex; align-items: center; gap: 5px; padding-left: 2px; margin-left: 1px; flex: none;
  font: 10px/16px ${MAIN}; white-space: nowrap;
  input { appearance: none; width: 11px; height: 11px; margin: 0; border-radius: 50%; background: #b8b8b8; border: 3px solid #4a4a4a; flex: none; }
`;

const Tools = ({ list, first }: { list: string; first?: boolean }) => (
  <>{list.split(" ").map((t, i) => {
    if (t === "|") return <Handle key={i} $first={first && i === 0} />;
    if (t === "-") return <Sep key={i} />;
    if (t === "v" || t === "v~") return <Caret key={i} $off={t !== "v"} aria-label="Rozwiń" />;
    const n = t.replace(/[!~#]/g, "");
    return <ToolBtn key={i} aria-label={n} $on={t.endsWith("!")} $box={t.endsWith("#")} disabled={t.endsWith("~")}><Icon n={n} /></ToolBtn>;
  })}</>
);
const MENU = ["Pro_jekt", "_Edycja", "_Widok", "Wa_rstwa", "_Ustawienia", "_Wtyczki", "Wekt_or", "_Raster", "_Baza danych", "W _internecie", "Siatka", "SCP", "Pro_cessing", "_Pomoc"];

/* ---------- docks ---------- */
const Main = styled.main`flex: 1; min-height: 0; display: grid; grid-template-columns: 247px minmax(0, 1fr) 439px; gap: 6px;`;
const Column = styled.section`display: flex; flex-direction: column; min-width: 0; overflow: hidden;`;
const DockHead = styled.div`
  height: 20px; flex: none; display: flex; align-items: center; gap: 3px; padding: 0 2px 0 4px;
  h2 { flex: 1; margin: 0; font: 12px/16px ${TITLE}; }
  button { width: 11px; height: 11px; padding: 0; border: 0; background: none; }
`;
const Dock = ({ title }: { title: string }) => (
  <DockHead><h2>{title}</h2>
    <button aria-label="Odczep"><svg width="11" height="11" viewBox="0 0 11 11" fill="none" stroke="#666"><rect x=".5" y=".5" width="10" height="10" rx="2" /><path d="M4.500 4V2.500h4v4H7M2.500 4.500h4v4h-4z" /></svg></button>
    <button aria-label="Zamknij panel"><svg width="11" height="11" viewBox="0 0 11 11" fill="none" stroke="#666"><rect x=".5" y=".5" width="10" height="10" rx="2" /><path d="m3 3 5 5m0-5L3 8" strokeWidth="2" /></svg></button>
  </DockHead>
);
const DockTools = styled.div`height: 28px; margin-bottom: 2px; flex: none; display: flex; align-items: center; padding-left: 4px;`;
const More = styled.button`margin-left: auto; margin-right: 4px; border: 0; background: none; padding: 0; font: 700 14px/16px ${MAIN}; color: #666;`;
const Splitter = styled.div`height: 6px; flex: none; display: grid; place-items: center;
  &::after { content: ""; width: 17px; height: 1px; background: repeating-linear-gradient(90deg, #aaa 0 1px, transparent 1px 3px); }`;
const TreeBox = styled.div<{ $h?: number }>`
  border: 1px solid ${LINE}; background: #fff; display: flex; overflow: hidden; min-height: 0;
  ${p => (p.$h ? `height: ${p.$h}px; flex: none;` : "flex: 1 1 0;")}
  ul { list-style: none; margin: 0; padding: 1px 0 0; flex: 1; min-width: 0; height: 0; }
`;
const Row = styled.li<{ $indent: number; $sel?: number; $gap?: number }>`
  height: 18px; display: flex; align-items: center; gap: ${p => p.$gap ?? 6}px; padding-left: ${p => p.$indent}px; white-space: nowrap;
  ${p => p.$sel && `background: #efefef; width: ${p.$sel}px; max-width: 100%;`}
`;
const Tri = styled.span<{ $open?: boolean }>`
  width: 7px; display: grid; place-items: center;
  &::after { content: ""; ${triangle("#555")} transform: rotate(${p => (p.$open ? 0 : -90)}deg); }
`;
const Scroll = styled.div`
  width: 15px; flex: none; border-left: 1px solid ${LINE}; background: #e6e6e6; display: flex; flex-direction: column;
  button { height: 14px; border: 0; padding: 0; background: #fff; display: grid; place-items: center; }
  button::after { content: ""; ${triangle("#555")} }
  button:first-child::after { transform: rotate(180deg); }
`;
const Thumb = styled.span<{ $before: number; $size: number }>`
  margin-top: ${p => p.$before}px; flex: 0 0 ${p => p.$size}px; margin-bottom: auto; background: linear-gradient(90deg, #fff, #f6f6f6); border: solid ${LINE}; border-width: 1px 0;
`;
const ScrollBar = ({ before, size }: { before: number; size: number }) => (
  <Scroll><button aria-label="W górę" /><Thumb $before={before} $size={size} /><button aria-label="W dół" /></Scroll>
);
const Table = styled.table`
  width: 247px; height: 95px; flex: none; border: 1px solid ${LINE}; background: #fff; border-spacing: 0; table-layout: fixed;
  th { height: 19px; padding: 0 2px; text-align: left; font: 11px/16px ${MAIN}; background: linear-gradient(#fff, #efefef); border-bottom: 1px solid ${LINE}; }
  th + th { border-left: 1px solid ${LINE}; }
  td { padding: 0; }
`;
const FormRow = styled.label<{ $top: number; $off?: boolean }>`
  display: flex; align-items: center; gap: 6px; margin: ${p => p.$top}px 5px 0 5px; color: ${p => (p.$off ? "#8a8a8a" : "#000")};
  ${p => p.$off && "gap: 4px;"}
`;
const LayerName = styled.span<{ $on: boolean; $u?: boolean }>`
  flex: 1; min-width: 0; font-weight: 700; color: ${p => (p.$on ? "#000" : "#838383")}; font-style: ${p => (p.$on ? "normal" : "italic")};
  text-decoration: ${p => (p.$u ? "underline" : "none")};
`;
const Mem = styled.button`width: 17px; height: 17px; padding: 0; margin-right: 4px; border: 1px solid #ddd; background: #f6f6f6; display: grid; place-items: center; flex: none;`;
const Swatch = styled.span<{ $kind: string; $c: string }>`
  flex: none; width: 16px; height: 16px; display: grid; place-items: center;
  ${p => p.$kind === "a" && `background: ${p.$c}; border: 1px solid #0006;`}
  &::after { content: ""; ${p => p.$kind === "l" && `width: 14px; height: 2px; margin-right: 2px; background: ${p.$c};`}
    ${p => p.$kind === "p" && `width: 7px; height: 7px; border-radius: 50%; background: ${p.$c}; border: 1px solid #555;`} }
`;
const Tabs = styled.div`
  height: 25px; flex: none; display: flex; align-items: flex-start; padding-top: 2px;
  button { height: 20px; padding: 0 10px; border: 1px solid ${LINE}; background: #e0e0e0; border-radius: 0 0 3px 3px; }
  button[aria-selected="true"] { background: #fbfbfb; height: 22px; border-top: 0; }
`;

type Layer = [string, boolean, string, string, boolean];
const LAYERS: Layer[] = [
  ["Deciduous", false, "a", "#f4a7b3", false], ["Mixed Trees", false, "a", "#e8718d", false], ["railroads", false, "l", "#b29ac6", false],
  ["Uproszczona geometria", true, "a", "#8d5a99", true], ["Wierzchołki [7469]", true, "p", "#6a9a6c", true], ["swamp", true, "a", "#85b66f", false],
  ["lokalizacja_hoteli(roznica)", true, "a", "#91522d", true], ["Bufo_liniekolejowe_9", false, "a", "#c43c39", true], ["Bufor_lotniska_9", false, "a", "#e15989", true],
  ["Wierzchołki [662]", true, "p", "#8d73b5", true], ["Przecięcia [8]", true, "p", "#b64545", true], ["majrivers", true, "l", "#a47eb5", false],
  ["pop_bristol [11]", false, "p", "#91522d", false], ["Bufor", false, "a", "#729b6f", true], ["rivers", true, "l", "#9fc78e", false],
  ["popp", false, "p", "#e8b12f", false], ["airports", false, "i", "", false], ["Długość linii", false, "a", "#b7484b", false],
];
const BROWSER: [string, string][] = [["pipelines", "linia"], ["popp", "punkt"], ["railroads", "linia"], ["regions", "poligon"], ["rivers", "linia"], ["storagep", "punkt"], ["swamp", "poligon"], ["trails", "linia"], ["trees", "poligon"], ["tundra", "poligon"]];

function LayersPanel() {
  return (
    <>
      <Dock title="Warstwy" />
      <DockTools><Tools list="pedzel grupa oko filtrm wyrazenie v rozwin zwin usunwarstwe" /></DockTools>
      <TreeBox>
        <ul>
          {LAYERS.map(([name, on, kind, c, mem]) => (
            <Row key={name} $indent={23} $sel={name.startsWith("Uproszczona") ? 231 : undefined}>
              <Check aria-label={name} defaultChecked={on} />
              {kind === "i" ? <Icon n="lotnisko" size={16} /> : <Swatch $kind={kind} $c={c} />}
              <LayerName $on={on} $u={name.startsWith("Uproszczona")}>{name}</LayerName>
              {mem && <Mem aria-label="Warstwa tymczasowa"><Icon n="pamiec" size={15} /></Mem>}
            </Row>
          ))}
        </ul>
        <ScrollBar before={0} size={232} />
      </TreeBox>
      <Tabs role="tablist"><button role="tab" aria-selected="true">Warstwy</button><button role="tab" aria-selected="false">Edytor węzłów</button></Tabs>
    </>
  );
}
const Wide = styled.div`flex: 1; display: flex; flex-direction: column; width: calc(100% + 6px);`;
const SearchBox = styled(BoxWrap)`flex: none; align-items: center; padding-left: 6px; margin: 1px 0 0 1px; input { align-self: stretch; } ${ClearBtn} { margin-right: 7px; }`;
const Blank = styled.div<{ $h?: number }>`border: 1px solid ${LINE}; background: #fff; ${p => (p.$h ? `height: ${p.$h}px; flex: none;` : "flex: 1;")}`;

/* ---------- map ---------- */
const Canvas = styled.div`position: relative; background: #fff; border: 1px solid ${LINE}; overflow: hidden; min-height: 0;
  svg { position: absolute; inset: 0; width: 100%; height: 100%; }`;
const DISCS: [number, number][] = [
  [576, 434], [579, 457], [650, 459], [622, 476], [595, 488], [488, 496], [505, 512], [412, 548], [432, 557], [521, 542], [545, 525], [560, 540], [575, 520], [591, 545], [594, 577], [594, 510],
  [599, 625], [607, 667], [525, 611], [492, 644], [478, 697], [562, 694], [550, 640], [575, 640], [515, 632], [590, 640], [580, 665], [660, 550], [674, 619], [679, 619],
  [678, 689], [712, 502], [742, 468], [755, 500], [745, 530], [736, 582], [777, 640], [760, 707], [757, 744], [548, 774], [619, 765], [655, 781], [689, 750], [672, 755],
  [612, 845], [518, 903], [427, 938], [367, 963], [240, 957], [376, 799], [382, 824], [738, 818],
];
const SWAMP: [number, number, number][] = [
  [810, 425, 22], [835, 395, 22], [850, 395, 22], [845, 425, 20], [878, 428, 20], [942, 415, 20], [965, 400, 18], [972, 415, 14], [1020, 422, 20], [1040, 425, 18],
  [980, 455, 20], [990, 450, 16], [1003, 480, 18], [1015, 492, 18], [1067, 476, 18], [1067, 490, 18], [1100, 436, 20], [1105, 455, 20], [1058, 566, 20], [1068, 555, 18],
  [930, 615, 20], [945, 600, 20], [965, 600, 16], [930, 668, 20], [943, 660, 14], [965, 710, 18], [985, 703, 18], [985, 718, 16], [380, 612, 20], [405, 595, 18],
  [435, 585, 20], [465, 590, 20], [480, 560, 24], [505, 550, 24], [530, 550, 20], [500, 580, 20], [520, 595, 24], [530, 610, 20], [515, 625, 16], [508, 663, 22],
  [675, 630, 18], [680, 620, 14], [730, 625, 17], [728, 645, 17], [705, 675, 20], [715, 703, 19], [580, 686, 16], [593, 686, 16], [546, 713, 17], [546, 727, 16],
  [595, 1012, 19], [600, 1035, 18], [608, 1062, 22], [625, 1055, 20], [660, 1200, 20], [668, 1180, 19], [745, 1210, 20], [758, 1195, 18], [768, 1185, 14], [845, 990, 24],
  [860, 985, 14], [835, 978, 14], [800, 1026, 21], [846, 1060, 20], [973, 922, 20], [932, 1085, 18], [945, 1110, 20], [952, 1135, 20], [935, 1165, 20], [958, 1172, 20],
  [870, 1252, 22], [885, 1255, 14], [912, 1232, 20], [930, 1240, 18], [960, 1230, 22], [985, 1225, 18], [975, 1260, 22], [945, 1265, 20], [930, 1280, 22], [960, 1280, 16],
];
const BRIGHT: [number, number][] = [[1012, 418], [1045, 425], [700, 678], [930, 672], [945, 658], [385, 618], [605, 1070], [655, 1206], [740, 1215], [862, 984], [848, 1062], [975, 925], [865, 1250], [958, 1180], [930, 1280], [985, 705], [546, 722], [580, 688]];
const LAND = "440,317 455,310 468,292 475,262 500,270 560,270 585,258 608,232 612,200 630,172 655,140 675,127 700,133 725,125 750,105 775,83 800,78 815,88 835,80 860,60 885,27 900,42 918,56 903,68 918,66 918,76 905,78 908,94 926,92 922,80 935,90 936,66 926,60 940,54 958,72 962,84 976,95 1000,82 1030,86 1050,90 1040,105 1044,118 1070,122 1072,132 1096,138 1118,125 1200,125 1200,1300 1040,1300 1020,1360 1000,1420 1018,1428 1014,1434 1026,1436 1020,1450 1006,1452 1008,1460 996,1462 990,1475 974,1474 976,1486 962,1490 968,1500 948,1502 950,1514 930,1512 922,1520 926,1528 910,1526 908,1542 892,1540 894,1556 878,1552 872,1566 860,1560 850,1568 854,1580 838,1578 828,1590 834,1606 826,1612 838,1618 826,1630 832,1640 816,1648 810,1668 798,1674 788,1650 765,1600 758,1560 770,1500 800,1480 640,1430 615,1420 590,1395 565,1370 534,1352 530,1330 522,1310 640,1250 650,900 650,600 600,420 503,375 490,362 470,348 462,330";
const GOLD = "#e4b535", BROWN = "#91502c", INK = "#33312b";
const MapArt = () => (
  <svg role="img" aria-label="Mapa Alaski">
    <g transform="translate(-254 -137)">
      <g transform="translate(380 290) scale(.33333)" fill={GOLD} stroke={INK} strokeWidth="3" strokeLinejoin="round">
        <polygon points={LAND} />
        <path d="M376 1157l39-29 45 27-15 60 30 80-40 14h-35l-20-14-15-60z" />
      </g>
      <g fill="none" transform="translate(380 290) scale(.33333)">
        <g stroke={INK} strokeWidth="3"><path d="M782 78l12-4 14 2 6 8M886 32l14 0 8 8 14 2 16 8M940 448v10h8v34h26v50M660 358h18v13h38v-6h20v11l80 5 65 12 7 12h240M770 1075h20l30 6v8h175v-12h30v-10h12V1160h70M1037 1160V1013h70M1037 1010l12-28M1037 1157h-22v113h-8l15 45M880 580l20 18M690 1235v20h-10v20h-15v20h-12v20h-15v18h-12v20" /></g>
        <g stroke="#8e5a9c" strokeWidth="5"><path d="M702 299l12-10 20-5 35-2 25 10 25-2 30 15 25 2 40-10 25-8 45 6 45-24 52-28-6-66 22-12 12-18v-22M692 407l20-4 20-20 35 10 25 8M900 445l40 15M905 550l35-5 25-15M892 635l-20 10-6 30M942 760h30M743 855l10-15M780 1103l38 27M998 1020l20 50 12 80M440 1175l15-15" /><path d="M1095 132h25l-8 22z" fill="#8e5a9c" /></g>
        <g stroke="#7fb374" strokeWidth="4"><path d="M750 700l20-25 30-15 55-15M745 690l20-30 40-25M710 410l35-5M945 770l25 25 20 25M960 790l-20 30M965 850l-30 35M750 940l20-10 15-30 50-8 40-5M760 1000l15-50M785 1090l25-20M755 1045l5-25M1050 1065l20 30M1010 965l22 14M1020 1205l22-15M695 1240l25 45 10 25M735 1255l25-20M795 1320l5-50-8-35M990 790l-15 20M770 870l18 22" /></g>
      </g>
      <g transform="translate(250 640) scale(.33333)" fill={GOLD} stroke={INK} strokeWidth="3" strokeLinejoin="round">
        <path d="M955 720l10-30 30-22 35 32 65 15-16 8 2 8-14-4-4 14-10-8-12 6-10-6-6 12-8 14-4-20-20 4-14 14-20 2-8 12-8-4-4 8-15-8-10 10-8-40-14-28 54-4 2 8-10 6 18 20 8-4-10-18 20 10 10 20 10-4z" />
        <path d="M1000 672v66M650 845l15-17 23-23 27 10 8 30h-30l-13 17h-25z" />
        <path d="M1326 580l14-20 25-15 30 60 2 20-12 10-6 20-14-2 8-20-12 8-10-8 8-8-18-2 12-8-4-6-16-6z" />
        <path d="M1325 683l12-15 18-5 8-10 6 10 12 5-10 10-20-2-20 12zM1263 748l6-6 4 10-4 10-8-4zM80 975l8-6 14 2v7l-18 4zM209 976l9-8h12l-4 8-14 4zM173 980l7-3 2 6-6 1zM320 60l8 2-4 12 12 16 16 8 2 4-14-4-16-16z" />
        <path d="M926 800l4-16 10-3 2 10 18 2-14 14-6-6zM962 838l8-16 14-14 6 10-16 14zM974 828l12-20 4 8 6-8-8 22zM1005 806l8 12-6 12 12 2 4 16M1012 816l10 14M1003 855l3 4M990 853l4 3M636 892l12-8M318 48h4M322 103h2M1194 708l4 8M1200 722l2 8M940 812h6M965 780l8 4M1200 635l-6 6M978 792l4 8M1176 664l8 2M1000 402v6M798 268h3M784 232l6 18 8 4" />
        <path d="M1205 592l10-20 30-18 20-20M1218 588l16-18M1310 475l40-10 5-30 40-5M1370 470l-20 24-34 6M1316 452l30-4 30-22" fill="none" />
      </g>
      <g fill="#26251f">{DISCS.map(([x, y], i) => <circle key={i} cx={x} cy={y} r="34.7" />)}</g>
      <g fill={BROWN}>{DISCS.map(([x, y], i) => <circle key={i} cx={x} cy={y} r="33.8" />)}</g>
      <g transform="translate(380 290) scale(.33333)" fill={GOLD} stroke={INK} strokeWidth="3">
        <path d="M415 562l45-17 60 20 27 35-2 35-8 36-32 28-30-30-8-50zM537 925l14-12 26 32-18 38-22-20zM590 1080l-7 2-12 30 8 1z" />
        <path d="M548 920l20 26M378 1158l20 10 14-2 12-12 14-6 12 8" fill="none" /><path d="M1102 633l14-3v6z" />
      </g>
      <g transform="translate(380 290) scale(.33333)">
        {SWAMP.map(([x, y, r], i) => <circle key={i} cx={x} cy={y} r={r + 1} fill="#262c28" stroke="#262c28" strokeWidth="4" strokeDasharray="4 2" />)}
        {SWAMP.map(([x, y, r], i) => <g key={i} fill="none" transform={`rotate(${(i * 67) % 360} ${x} ${y})`}>
          <circle cx={x} cy={y} r={r * 0.6} stroke="#6fa277" strokeWidth="2.5" strokeDasharray={`${r * (i % 3 ? 0.6 : 1.2)} ${r * 1.3}`} />
          <path d={`M${x - r * 0.4} ${y}l${r * 0.3} ${-r * 0.3} ${r * 0.2} ${r * 0.5} ${r * 0.4} ${-r * 0.4}`} stroke="#8348a0" strokeWidth="5" />
        </g>)}
        <g fill="#6fa277" stroke="#262c28" strokeWidth="2">{BRIGHT.map(([x, y], i) => <circle key={i} cx={x} cy={y} r="8" />)}</g>
      </g>
    </g>
  </svg>
);

/* ---------- dialog ---------- */
const Dialog = styled.section`
  position: absolute; left: 753px; top: 301px; width: 689px; background: #f0f0f0; border: 1px solid #a8a8a8; border-radius: 8px;
  box-shadow: 0 18px 40px rgba(0, 0, 0, 0.3), 0 2px 12px rgba(0, 0, 0, 0.14); font: 10px/14px ${DIALOG};
`;
const DialogTitle = styled.header`
  height: 30px; background: #fff; border-radius: 7px 7px 0 0; display: flex; align-items: center; gap: 5px; padding-left: 7px; color: #8c8c8c; font: 11px/16px ${MAIN};
  h2 { margin: 0; flex: 1; font: inherit; }
`;
const DialogBody = styled.div`padding: 11px 11px 10px 10px; display: flex; flex-direction: column;`;
const Upper = styled.div`display: grid; grid-template-columns: 389px 16px minmax(0, 1fr); height: 466px;`;
const TabHead = styled.div`
  display: flex; align-items: flex-end; height: 24px; position: relative; z-index: 1; margin-bottom: -1px;
  button { border: 1px solid ${LINE}; height: 22px; padding: 0 12px; background: #e4e4e4; border-radius: 3px 3px 0 0; border-left: 0; }
  button[aria-selected="true"] { height: 24px; padding: 0 11px 0 10px; background: #fff; border-left: 1px solid ${LINE}; border-bottom: 0; }
`;
const Pane = styled.form`
  height: 443px; border: 1px solid ${LINE}; padding: 11px 5px; display: flex; flex-direction: column; gap: 8px; margin: 0;
  background: linear-gradient(#fbfbfb 0 7px, #f0f0f0 7px);
`;
const Field = styled.div`display: flex; flex-direction: column; gap: 5px;`;
const Line = styled.div<{ $gap?: number }>`display: flex; align-items: center; gap: ${p => p.$gap ?? 6}px;`;
const CheckLine = styled.label<{ $off?: boolean }>`display: flex; align-items: center; gap: 4px; height: 17px; color: ${p => (p.$off ? "#8a8a8a" : "#000")};`;
const Dots = styled.button<{ $h: number }>`
  position: relative; width: 23px; height: ${p => p.$h}px; padding: 0; border: 1px solid #a8a8a8; border-radius: 3px; background: linear-gradient(#fff, #f0f0f0); flex: none;
  &::after { content: ""; position: absolute; right: 1px; bottom: 3px; ${triangle("#555", 3)} }
`;
const Plain = styled.button`border: 0; background: none; padding: 0; flex: none;`;
const Side = styled.div`
  display: flex; flex-direction: column; align-items: center; justify-content: space-between; padding: 2px 3px 224px 0;
  &::after { content: ""; width: 1px; height: 17px; background: repeating-linear-gradient(#aaa 0 1px, transparent 1px 3px); }
`;
const Help = styled.article`
  background: #fff; border: 1px solid ${LINE}; padding: 4px 3px 4px 4px; color: #5a5a5a; line-height: 13px;
  h3 { margin: 0 0 12px; font: 700 17px/22px ${TITLE}; color: #505050; }
  p { margin: 0 0 12px; }
`;
const Progress = styled.div`flex: 1; height: 21px; background: #fff; border: 1px solid #a8a8a8; border-radius: 3px; text-align: center; line-height: 19px;`;
const Push = styled.button<{ $w?: number; $menu?: boolean }>`
  ${p => (p.$w ? `width: ${p.$w}px;` : "")} height: 21px; padding: 0 2px; border: 1px solid #a8a8a8; border-radius: 3px; background: linear-gradient(#fff, #f0f0f0); white-space: nowrap;
  &:disabled { color: #8a8a8a; border-color: #c8c8c8; }
  display: flex; align-items: center; justify-content: center; gap: 5px;
  ${p => p.$menu && css`&::after { content: ""; ${triangle("#555", 3)} }`}
`;
const Spacer = styled.span`flex: 1;`;

/* ---------- status + taskbar ---------- */
const Status = styled.footer`
  height: 29px; display: flex; align-items: center; justify-content: flex-end; border-bottom: 1px solid #d4d4d4; font: 10px/16px ${DIALOG};
  label { display: flex; align-items: center; white-space: nowrap; }
`;
const Minis = styled.div`position: absolute; left: 8px; bottom: 43px; display: flex; gap: 16px;`;
const Mini = styled.div`
  width: 144px; height: 28px; background: #fff; border: 1px solid #bbb; border-radius: 7px; box-shadow: 0 3px 10px #0005; display: flex; align-items: center; padding-left: 7px;
  button { border: 0; padding: 0; background: none; width: 46px; display: grid; place-items: center; color: #888; }
  button:first-of-type { width: 12px; margin-right: 14px; }
`;
const Locator = styled.div`position: absolute; left: 4px; bottom: 47px; width: 166px; height: 21px; border: 1px solid ${LINE}; border-radius: 3px; background: #eee;`;
const Taskbar = styled.nav`
  position: relative; height: 42px; background: #dadada; display: flex; justify-content: center; align-items: flex-end; padding-left: 7px;
`;
const Task = styled.button<{ $active?: boolean; $mark?: boolean }>`
  width: 38px; height: 38px; margin: 0 3px; padding: 0; border: 0; border-radius: 4px 4px 0 0; display: grid; place-items: center; position: relative;
  background: ${p => (p.$active ? "#ededed" : "none")};
  &::after { content: ""; position: absolute; bottom: 0; height: 3px; border-radius: 2px; width: ${p => (p.$active ? 16 : 6)}px; background: ${p => (p.$active ? "#0a74d1" : p.$mark ? "#858585" : "transparent")}; }
`;
const Tray = styled.div`position: absolute; right: 13px; top: 2px; height: 42px; display: flex; align-items: center; gap: 7px; color: #222;
  time { text-align: right; line-height: 16px; margin: 0 3px 0 7px; }`;
const APPS: [string, ReactNode][] = [
  ["Start", <g fill="#0a78d4"><path d="M2 2h11v11H2zM15 2h11v11H15zM2 15h11v11H2zM15 15h11v11H15z" /></g>],
  ["Eksplorator plików", <g><path d="M1 4h10l3 3h13v17H1z" fill="#e5a820" /><path d="M1 8h26v17H1z" fill="#fbcf4b" /><path d="M6 18h16v8H6z" fill="#1479cf" /><path d="M10 22h8" stroke="#0c5aa0" strokeWidth="2" /></g>],
  ["Teams", <g><circle cx="17" cy="7" r="4" fill="#7b83eb" /><path d="M12 11h14v9a6 6 0 0 1-13 2z" fill="#5059c9" /><rect x="1" y="8" width="14" height="14" rx="1" fill="#4048b5" /><path d="M4.500 11.500h7M8 11.500V19" stroke="#fff" strokeWidth="2" /><circle cx="23" cy="5" r="5" fill="#7fb81e" stroke="#fff" /><path d="m20.500 5 2 2 3-4" stroke="#fff" fill="none" strokeWidth="1.5" /></g>],
  ["Chrome", <g><circle cx="13" cy="15" r="12" fill="#fbc116" /><path d="M13 15 2.600 9A12 12 0 0 1 23.400 9z" fill="#e33b2e" /><path d="M13 15 2.600 9A12 12 0 0 0 13 27l5-9z" fill="#2da94f" /><circle cx="13" cy="15" r="5.5" fill="#4285f4" stroke="#fff" strokeWidth="1.6" /><circle cx="21.500" cy="6.500" r="6.5" fill="#7e57c2" /><text x="18.500" y="10" fontSize="9" fontFamily="Noto Sans" fill="#fff">T</text></g>],
  ["Notatnik", <g><rect x="5" y="3" width="18" height="22" fill="#3cc0d8" /><path d="M5 26h18" stroke="#8a4b1a" strokeWidth="2" /><path d="M9 10h10M9 14h10M9 18h10" stroke="#0f5f7a" strokeWidth="2" /><path d="M7 1v4M11 1v4M15 1v4M19 1v4" stroke="#222" strokeWidth="1.5" /></g>],
  ["Edge", <g><circle cx="14" cy="14" r="12.5" fill="#1683d8" /><path d="M2 12C4 3 24-2 26.500 13c0 6-9 6-10 3 3-6-8-9-14.500-4z" fill="#4dc98a" /><path d="M1.700 14c5-8 15-6 15-1-4-2-8 2-5 7s9 4 12 2c-6 8-20 5-22-8z" fill="#0f5fb0" /><path d="M12 14c0-3 5-3 5 0 0 2-1 3 0 4-3 1-5-1-5-4z" fill="#e4eef6" /></g>],
  ["Aparat", <g><path d="M1 7h7l2-3h8l2 3h7v18H1z" fill="#6b747d" /><circle cx="14" cy="15" r="7" fill="#e8edf2" /><circle cx="14" cy="15" r="5.2" fill="#8a7cf0" /><circle cx="13" cy="17" r="3.5" fill="#5fb4f4" /></g>],
  ["Acrobat", <g><rect x="2" y="2" width="24" height="24" rx="4" fill="#b30b00" /><path d="M7 20c3-1 8-8 7-13-1 4 3 10 8 10-4-1-11 0-15 3z" fill="none" stroke="#fff" strokeWidth="1.5" /></g>],
  ["PostgreSQL", <g><path d="M4 4c5-3 7-1 10-1s9-2 11 3c1 5-3 11-4 11l-4-1-1 9c-2 2-4 0-4-3l-1-5C7 21 1 9 4 4z" fill="#336791" stroke="#fff" /><path d="M9 4c-2 5 0 8 1 12M17 4c3 5 0 8 0 12" stroke="#fff" fill="none" /></g>],
  ["Globus", <g transform="scale(1.4)"><circle cx="10" cy="10" r="9" fill="#54718f" stroke="#2b3a4c" /><path d="M4 5c3-2 6-1 5 2s-4 2-5 4-2-4 0-6zM11 3c3 0 4 2 4 4l-3-1z" fill="#e7eef4" /><path d="M10 11c3-3 7-1 7 1l-4 5-3-2z" fill="#a8cc9a" /></g>],
  ["QGIS", <g transform="scale(1.38)">{qlogo}</g>],
  ["Wycinanie", <g fill="none"><path d="M4 14V4h11" stroke="#d8411f" strokeWidth="4" strokeDasharray="3.500 1.2" /><path d="M14 9v13M6 17h17" stroke="#5a6068" strokeWidth="2.5" /><circle cx="14" cy="25" r="2.2" stroke="#1b8fe0" strokeWidth="2" /><circle cx="25" cy="17" r="2.2" stroke="#1b8fe0" strokeWidth="2" /></g>],
];
const X = () => <svg width="12" height="12" viewBox="0 0 12 12" stroke="currentColor"><path d="m1 1 10 10M11 1 1 11" /></svg>;
const Restore = () => <svg width="11" height="11" viewBox="0 0 11 11" fill="none" stroke="currentColor"><rect x=".5" y="2.5" width="8" height="8" rx="1.5" /><path d="M3 .5h5.500a2 2 0 0 1 2 2V8" /></svg>;
const Square = () => <svg width="11" height="11" viewBox="0 0 11 11" fill="none" stroke="currentColor"><rect x=".5" y=".5" width="10" height="10" rx="1" /></svg>;

export default function App() {
  return (
    <Page>
      <Global />
      <TitleBar>
        <Icon n="qgis" size={16} /><h1>*Projekt bez nazwy — QGIS</h1>
        <WinBtns>
          <WinBtn aria-label="Minimalizuj"><svg width="10" height="1" viewBox="0 0 10 1"><path d="M0 .5h10" stroke="currentColor" /></svg></WinBtn>
          <WinBtn aria-label="Przywróć"><Restore /></WinBtn>
          <WinBtn aria-label="Zamknij"><X /></WinBtn>
        </WinBtns>
      </TitleBar>
      <Menu>
        {MENU.map(m => { const [a, b] = m.includes("_") ? m.split("_") : [m, ""]; return <button key={m}>{a}<u>{b.slice(0, 1)}</u>{b.slice(1)}</button>; })}
      </Menu>
      <Bar><Tools first list="| nowy otworz zapisz wydruk menedzer styl | raczka przesun powieksz pomniejsz zasieg zaznaczone warstwa natywny~ poprzedni nastepny~ mapa mapa3d zakladka zakladki czas odswiez | informacje! statystyki narzedzia! suma tabela v pomiar v podpowiedz akcja~ v~" /></Bar>
      <Bar><Tools first list="| zrodla geopakiet# shp spatialite tymczasowa siatka wirtualna | edycje edytuj zapiszwarstwe~ dodajobiekt~ wierzcholki~ v~ atrybuty~ usun~ wytnij~ kopiuj~ wklej~ cofnij~ ponow~ | etykieta diagram - pin etykieta2 - et1~ et2~ et3~ et4~ et5~ | szukajmapy | python | pomoc |" /></Bar>
      <Bar>
        <Tools first list="| zaznacz v zaznaczwart v odznacz v zaznaczlok | scp scpzoom" />
        <Radio $w={59}><input type="radio" name="rgb" />RGB =</Radio>
        <Select label="Kompozycja RGB" value="-" w={80} h={20} split white />
        <Tools list="lut1 lut2 roi" />
        <Radio $w={42}><input type="radio" name="ot" />OT</Radio>
        <Tools list="roipoly roiplus roired~" />
        <DarkTag $w={25}>Odl.</DarkTag><Spin label="Odległość" value="0,010000" w={100} /><Gap $w={2} />
        <DarkTag $w={24}>Min</DarkTag><Spin label="Minimum" value="60" w={60} /><Gap $w={2} />
        <DarkTag $w={27}>Max</DarkTag><Spin label="Maksimum" value="100" w={61} />
        <Tools list="podglad" />
        <Radio $w={63}><input type="radio" name="pod" />Podgląd</Radio>
        <Tools list="klasy roired~" />
        <DarkTag $w={11}>T</DarkTag><Spin label="Przezroczystość" value="0" w={49} /><Gap $w={1} />
        <DarkTag $w={10}>S</DarkTag><Spin label="Rozmiar" value="200" w={61} />
        <Tools list="kosz kml | raster" />
        <Spin label="Pasmo 0" value="0" w={60} /><Tools list="dalej" />
        <Spin label="Pasmo 1" value="1" w={60} /><Tools list="dalej" />
        <Spin label="Pasmo 2" value="2" w={60} /><Tools list="dalej mozaika~ | przelacz~ siatkasel~ v~ siatkawyr~ siatkawez~ v~ | adnotacja v zmienadn adnpoly adnlinia adnpunkt adntekst - adntekst2 v" />
      </Bar>

      <Main>
        <Column>
          <Dock title="Przeglądarka" />
          <DockTools><Tools list="dodajwarstwe odswiez filtr zwin info" /></DockTools>
          <TreeBox $h={200}>
            <ul>
              {BROWSER.map(([t, i]) => <Row key={t} $indent={53} $sel={t === "swamp" ? 179 : undefined}><Tri /><Icon n={i} size={17} />{t}</Row>)}
              <Row $indent={19}><Icon n="hana" size={16} />SAP HANA</Row>
            </ul>
            <ScrollBar before={75} size={54} />
          </TreeBox>
          <Splitter />
          <Dock title="Wynik identyfikacji" />
          <DockTools><Tools list="formularz~ - rozwin zwin rozwinnowe - odznacz - kopiuj~ drukuj~ -" /><More aria-label="Więcej narzędzi">»</More></DockTools>
          <Table><colgroup><col width="141" /><col /></colgroup><thead><tr><th>Obiekt</th><th>Wartość</th></tr></thead><tbody><tr><td colSpan={2} /></tr></tbody></Table>
          <FormRow $top={5}>Tryb<Select label="Tryb" value="bieżąca warstwa" h={24} /></FormRow>
          <FormRow $top={8} $off>Widok<Select label="Widok" value="Drzewo" w={72} h={22} off /></FormRow>
          <Rise $h={8} />
          <Splitter />
          <LayersPanel />
        </Column>

        <Canvas><MapArt /></Canvas>

        <Column>
          <Wide>
            <Dock title="Algorytmy Processingu" />
            <DockTools><Tools list="modele skrypty czas wyniki! - wmiejscu - opcje" /></DockTools>
            <SearchBox $h={21}><Icon n="lupa" size={15} /><input aria-label="Szukaj" defaultValue="upro" /><ClearIcon /></SearchBox>
            <TreeBox $h={142}>
              <ul>
                <Row $indent={6} $gap={7}><Tri /><Icon n="czas" size={18} />Ostatnio używane</Row>
                <Row $indent={6} $gap={7}><Tri $open /><Icon n="qgis" size={18} />Wektor - geometria</Row>
                <Row $indent={43} $sel={460}><Icon n="uprosc" size={16} />Uprość geometrię</Row>
              </ul>
            </TreeBox>
            <Splitter />
            <Dock title="Podgląd wyników" />
            <Blank $h={312} />
            <Splitter />
            <Blank />
          </Wide>
        </Column>
      </Main>

      <Status>
        <label htmlFor="xy">Współrzędne</label><Gap $w={4} />
        <BoxWrap $w={106} $h={22}><input id="xy" defaultValue="-4279524 7982487" /></BoxWrap>
        <Gap $w={4} /><Icon n="mysz" size={16} /><Gap $w={12} />
        Skala<Gap $w={4} /><Select label="Skala" value="1:11040080" w={82} h={22} split white />
        <Gap $w={11} /><Icon n="klodka" size={16} /><Gap $w={4} />
        Powiększenie<Gap $w={4} /><Spin label="Powiększenie" value="100%" w={84} h={21} />
        <Gap $w={8} />Kąt obrotu<Gap $w={8} /><Spin label="Kąt obrotu" value="0,0 °" w={84} h={21} />
        <Gap $w={6} /><label><Check defaultChecked /><Gap $w={4} />Renderuj</label>
        <Gap $w={18} /><Icon n="uklad" size={16} />EPSG:2964<Gap $w={22} /><Icon n="dymek" size={17} />
      </Status>
      <Taskbar>
        {APPS.map(([n, art], i) => <Task key={n} aria-label={n} $mark={i > 0} $active={i === APPS.length - 1}><svg width="26" height="26" viewBox="0 0 28 28">{art}</svg></Task>)}
        <Tray>
          <svg width="13" height="8" viewBox="0 0 13 8" fill="none" stroke="currentColor" strokeWidth="1.4"><path d="m1 7 5.500-5.500L12 7" /></svg>
          <Gap $w={0} />
          <svg width="16" height="13" viewBox="0 0 16 13" fill="none" stroke="currentColor" strokeWidth="1.2"><path d="M1 5a10 10 0 0 1 14 0M3 7.500a7 7 0 0 1 10 0M5.500 10a4 4 0 0 1 5 0" /><circle cx="8" cy="11.500" r="1" fill="currentColor" /></svg>
          <svg width="16" height="13" viewBox="0 0 16 13" fill="none" stroke="currentColor" strokeWidth="1.2"><path d="M1 4.500h2.500L7 1.500v10L3.500 8.500H1zM10 4.500l4.500 4.500M14.500 4.500 10 9" /></svg>
          <svg width="17" height="11" viewBox="0 0 17 11" fill="none" stroke="currentColor" strokeWidth="1.3"><rect x=".7" y=".7" width="13" height="9.5" rx="2" /><rect x="2.5" y="2.5" width="4" height="6" fill="currentColor" stroke="none" /><path d="M15.500 4v3" strokeWidth="2" /></svg>
          <time>19:47<br />06.11.2022</time>
          <svg width="14" height="15" viewBox="0 0 14 15" fill="none" stroke="currentColor" strokeWidth="1.2"><path d="M7 1c6 1 8 8 3 12-3 2-7 1-9-1 6 0 8-5 6-11z" /></svg>
        </Tray>
      </Taskbar>
      <Locator />
      <Minis>{[0, 1].map(i => <Mini key={i}><Icon n="qgis" size={17} /><button aria-label="Przywróć"><Restore /></button><button aria-label="Maksymalizuj"><Square /></button><button aria-label="Zamknij"><X /></button></Mini>)}</Minis>

      <Dialog role="dialog" aria-label="Uprość geometrię">
        <DialogTitle><Icon n="qgis" size={17} /><h2>Uprość geometrię</h2><WinBtn $w={32} aria-label="Zamknij okno"><X /></WinBtn></DialogTitle>
        <DialogBody>
          <Upper>
            <div>
              <TabHead role="tablist"><button role="tab" aria-selected="true">Parametry</button><button role="tab" aria-selected="false">Plik zdarzeń</button></TabHead>
              <Pane onSubmit={e => e.preventDefault()}>
                <Field>
                  <span>Warstwa wejściowa</span>
                  <Line $gap={8}><Select label="Warstwa wejściowa" value="swamp [EPSG:2964]" icon="poligon" w={276} h={24} /><Plain type="button" aria-label="Iteruj"><Icon n="iteruj" size={22} /></Plain><Spacer /><Plain type="button" aria-label="Opcje"><Icon n="opcje" size={24} /></Plain><Dots type="button" $h={20} aria-label="Wybierz">...</Dots></Line>
                </Field>
                <CheckLine $off><Check disabled />Tylko zaznaczone obiekty</CheckLine>
                <Field><span>Metoda upraszczania</span><Line><Select label="Metoda upraszczania" value="odległość (Douglas-Peucker)" h={22} /></Line></Field>
                <Field><span>Tolerancja</span><Line $gap={9}><Spin label="Tolerancja" value="100,000000" w={260} h={20} clear /><Select label="Jednostka" value="metry" w={72} h={22} /><Plain type="button" aria-label="Zdefiniowane danymi"><Icon n="dane" size={22} /></Plain></Line></Field>
                <Field><span>Uproszczona geometria</span><Line><BoxWrap $h={22}><input aria-label="Uproszczona geometria" placeholder="[Twórz warstwę tymczasową]" /></BoxWrap><Dots type="button" $h={22} aria-label="Wybierz plik">...</Dots></Line></Field>
                <CheckLine><Check defaultChecked />Wczytaj plik wynikowy po zakończeniu</CheckLine>
              </Pane>
            </div>
            <Side><Tri /></Side>
            <Help>
              <h3>Uprość geometrię</h3>
              <p>Algorytm upraszcza geometrie warstw liniowych lub poligonowych. Tworzona jest nowa warstwa z tymi samymi obiektami, co źródłowe, ale geometrie tych obiektów posiadają mniejszą liczbę wierzchołków.</p>
              <p>Algorytm pozwala wybrać metodę upraszczania: bazującą na odległości (algorytm Douglas-Peucker'a), na powierzchni (algorytm Visvalingam) oraz przyciąganiu geometrii do siatki.</p>
            </Help>
          </Upper>
          <Rise $h={25} />
          <Line><Progress role="progressbar">0%</Progress><Push $w={80} disabled>Anuluj</Push></Line>
          <Rise $h={7} />
          <Line><Push $w={95} $menu>Zaawansowane</Push><Push $w={202}>Wykonaj jako przetwarzanie wsadowe…</Push><Spacer /><Push $w={80}>Uruchom</Push><Push $w={80}>Zamknij</Push><Push $w={80}>Pomoc</Push></Line>
        </DialogBody>
      </Dialog>
    </Page>
  );
}
